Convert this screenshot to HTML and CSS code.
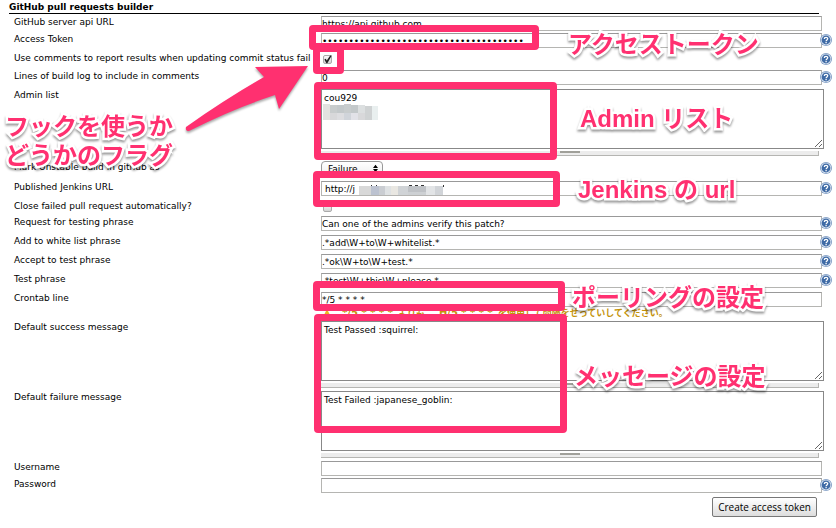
FILE: index.html
```html
<!DOCTYPE html>
<html lang="ja">
<head>
<meta charset="utf-8">
<title>GitHub pull requests builder</title>
<link rel="stylesheet" href="styles.css">
</head>
<body>
<svg class="defs" aria-hidden="true">
  <symbol id="help" viewBox="0 0 12 12">
    <circle cx="6" cy="6" r="6" fill="#7f9cc4"/>
    <circle cx="6" cy="6" r="5.2" fill="#dbe5f1"/>
    <circle cx="6" cy="6" r="4.4" fill="#3f6ba6"/>
    <path d="M4.3 4.9C4.3 2.7 7.8 2.8 7.7 4.8C7.6 6 6.2 5.9 6.1 7.2M6.1 8.1V9.3" fill="none" stroke="#fff" stroke-width="1.3"/>
  </symbol>
  <symbol id="warn" viewBox="0 0 8 8"><path d="M4 0L8 8H0Z" fill="#e8b820"/></symbol>
</svg>
<main class="page">
  <form class="builder">
    <h1 class="title">GitHub pull requests builder</h1>
    <div class="row tight"><label for="api">GitHub server api URL</label><div class="control"><input class="text" id="api" type="text" value="https://api.github.com"></div></div>
    <div class="row"><label for="token">Access Token</label><div class="control"><input class="text" id="token" type="password" value="01234567890123456789012345678901234567"></div><svg class="help"><use href="#help"/></svg></div>
    <div class="row"><label for="comments">Use comments to report results when updating commit status fail</label><div class="control"><input class="check" id="comments" type="checkbox" checked></div><svg class="help"><use href="#help"/></svg></div>
    <div class="row"><label for="lines">Lines of build log to include in comments</label><div class="control"><input class="text" id="lines" type="text" value="0"></div><svg class="help"><use href="#help"/></svg></div>
    <div class="row multi"><label for="admins">Admin list</label><div class="control"><textarea class="area" id="admins">cou929</textarea><div class="handle"></div></div></div>
    <div class="row spaced"><label for="unstable">Mark Unstable build in github as</label><div class="control"><span class="picker"><select id="unstable"><option>Failure</option></select><svg viewBox="0 0 6 9"><path d="M3 0L6 4H0ZM3 9L6 5H0Z"/></svg></span></div><svg class="help"><use href="#help"/></svg></div>
    <div class="row"><label for="jenkins">Published Jenkins URL</label><div class="control"><input class="text inset" id="jenkins" type="text" value="http://j"></div><svg class="help"><use href="#help"/></svg></div>
    <div class="row tight"><label for="close">Close failed pull request automatically?</label><div class="control"><input class="check" id="close" type="checkbox"></div></div>
    <div class="row"><label for="request">Request for testing phrase</label><div class="control"><input class="text" id="request" type="text" value="Can one of the admins verify this patch?"></div><svg class="help"><use href="#help"/></svg></div>
    <div class="row"><label for="white">Add to white list phrase</label><div class="control"><input class="text" id="white" type="text" value=".*add\W+to\W+whitelist.*"></div><svg class="help"><use href="#help"/></svg></div>
    <div class="row"><label for="accept">Accept to test phrase</label><div class="control"><input class="text" id="accept" type="text" value=".*ok\W+to\W+test.*"></div><svg class="help"><use href="#help"/></svg></div>
    <div class="row"><label for="test">Test phrase</label><div class="control"><input class="text" id="test" type="text" value=".*test\W+this\W+please.*"></div><svg class="help"><use href="#help"/></svg></div>
    <div class="row tight"><label for="cron">Crontab line</label><div class="control"><input class="text" id="cron" type="text" value="*/5 * * * *"><p class="warning"><svg><use href="#warn"/></svg><span><span class="expr">"*/5 * * * *"</span>よりも、<span class="expr">"H/5 * * * *"</span>を使用して間隔をせっていしてください。</span></p></div></div>
    <div class="row multi"><label for="success">Default success message</label><div class="control"><textarea class="area" id="success">Test Passed :squirrel:</textarea><div class="handle"></div></div></div>
    <div class="row multi"><label for="failure">Default failure message</label><div class="control"><textarea class="area" id="failure">Test Failed :japanese_goblin:</textarea><div class="handle"></div></div></div>
    <div class="row tight"><label for="user">Username</label><div class="control"><input class="text" id="user" type="text"></div></div>
    <div class="row"><label for="pass">Password</label><div class="control"><input class="text" id="pass" type="password"></div><svg class="help"><use href="#help"/></svg></div>
    <div class="actions"><button class="button" type="button">Create access token</button></div>
  </form>

  <div class="notes">
    <svg class="mosaic mosaic-admin" viewBox="0 0 55 16" shape-rendering="crispEdges">
      <path fill="#e2e2e0" d="M0 0h7v16H0z"/><path fill="#c8cccd" d="M7 1h7v8H7zM21 0h7v9h-7z"/><path fill="#c3c8ca" d="M14 1h7v8h-7zM28 1h7v8h-7z"/><path fill="#dcdfe0" d="M35 1h7v8h-7z"/><path fill="#cfd2d3" d="M42 2h7v14h-7z"/><path fill="#e9efef" d="M49 2h6v14h-6z"/><path fill="#d8d8da" d="M7 9h7v7H7zM35 9h7v7h-7z"/><path fill="#dddde0" d="M14 9h7v7h-7z"/><path fill="#d0d4da" d="M21 9h7v7h-7z"/><path fill="#e2e2e8" d="M28 9h7v7h-7z"/>
    </svg>
    <svg class="mosaic mosaic-url" viewBox="0 0 86 10" shape-rendering="crispEdges">
      <path fill="#d8d8d8" d="M0 1h12v9H0z"/><path fill="#bcc2d0" d="M12 1h8v9h-8z"/><path fill="#cacdd2" d="M20 1h6v9h-6z"/><path fill="#dfe2e4" d="M26 1h13v9H26z"/><path fill="#e9e7e2" d="M32 1h7v9h-7z"/><path fill="#d0d3d6" d="M39 1h10v9H39z"/><path fill="#bfc2c6" d="M49 1h18v6H49z"/><path fill="#cdd0d3" d="M49 7h18v3H49z"/><path fill="#e2e4e6" d="M67 1h9v9h-9z"/><path fill="#d1d4d8" d="M76 1h8v9h-8z"/>
      <path fill="#333" d="M12 0h1v1h-1zM17 0h1v1h-1zM50 0h3v1h-3zM56 0h3v1h-3zM62 0h3v1h-3zM84 0h1v2h-1z"/>
    </svg>
    <svg class="arrow" viewBox="0 0 140 80"><path d="M126 4L97 47L93 33Q50 47 7 69Q3 69 4 65Q42 38 82 15L73 5Z"/></svg>
    <div class="frame frame-token"></div>
    <div class="frame frame-flag"></div>
    <div class="frame frame-admin"></div>
    <div class="frame frame-url"></div>
    <div class="frame frame-cron"></div>
    <div class="frame frame-message"></div>
    <p class="note note-token">アクセストークン</p>
    <p class="note note-flag">フックを使うか<br>どうかのフラグ</p>
    <p class="note note-admin">Admin リスト</p>
    <p class="note note-url">Jenkins の url</p>
    <p class="note note-cron">ポーリングの設定</p>
    <p class="note note-message">メッセージの設定</p>
  </div>
</main>
</body>
</html>
```
FILE: styles.css
```css
* { box-sizing: border-box; }
body { margin: 0; background: #fff; color: #000; font: 9px/13px "DejaVu Sans", "Noto Sans CJK JP", sans-serif; }
.defs { position: absolute; width: 0; height: 0; }
.page { position: relative; overflow: hidden; }
.builder { padding: 2px 4px 10px 9px; }
.title { margin: 0 13px 2px 0; border-bottom: 1px solid #000; font-size: 9px; line-height: 11px; }
.row { display: grid; grid-template-columns: 307px 1fr 8px; padding: 0 0 4px 5px; align-items: start; }
.row.tight { padding-bottom: 2px; }
.row.multi { padding-bottom: 3px; }
.row.spaced { padding-top: 2px; }
.row label { white-space: nowrap; }
.control { min-width: 0; }
.help { width: 12px; height: 12px; margin: 1px 0 0 -4px; }
.text, .area { display: block; width: 100%; margin: 0; border: 1px solid #b5b5b2; border-top-color: #999; border-radius: 0; background: #fff; color: #000; font: inherit; }
.text { width: calc(100% - 2px); height: 15px; padding: 0; }
.text.inset { padding-left: 3px; }
.area { height: 60px; padding: 2px; border-color: #888; resize: vertical; }
.handle { height: 5px; margin: 2px 5px 0 0; border: solid #b5b5b2; border-width: 0 1px 1px 0; background: linear-gradient(#a0a09a, #a0a09a) center top / 20px 2px no-repeat #ececec; }
.check { position: relative; display: block; width: 9px; height: 9px; margin: 3px 2px 2px; border: 1px solid #aaa; border-radius: 2px; background: linear-gradient(#fafafa, #d4d4d4); appearance: none; }
.check:checked::before { content: ""; position: absolute; inset: -1px; background: #222; clip-path: polygon(15% 50%, 30% 42%, 42% 62%, 80% 5%, 98% 5%, 48% 92%, 38% 92%); }
.picker { position: relative; display: block; width: 62px; }
.picker select { display: block; width: 100%; height: 16px; padding: 0 6px; border: 1px solid #999; border-radius: 4px; background: linear-gradient(#fff, #eee); appearance: none; color: #000; font: inherit; }
.picker svg { position: absolute; right: 5px; top: 3px; width: 5px; height: 9px; }
.warning { display: flex; gap: 6px; margin: 0 0 0 2px; color: #c4930a; font-weight: bold; line-height: 12px; white-space: nowrap; }
.warning svg { width: 8px; height: 8px; margin-top: 2px; }
.expr { font-size: 10px; }
.actions { display: flex; justify-content: flex-end; padding-right: 15px; }
.button { height: 20px; padding: 0 5px; border: 1px solid #777; border-radius: 2px; background: linear-gradient(#fff, #ddd); color: #000; font: 10px/18px "Open Sans", sans-serif; }
.notes { position: absolute; inset: 0; pointer-events: none; }
.mosaic { position: absolute; }
.mosaic-admin { left: 323px; top: 104px; width: 55px; height: 16px; }
.mosaic-url { left: 359px; top: 185px; width: 86px; height: 10px; }
.frame { position: absolute; border: 7px solid #ff3070; border-radius: 4px; }
.frame-token { left: 309px; top: 25px; width: 230px; height: 25px; }
.frame-flag { left: 313px; top: 45px; width: 31px; height: 29px; }
.frame-admin { left: 314px; top: 82px; width: 243px; height: 78px; }
.frame-url { left: 313px; top: 171px; width: 247px; height: 36px; }
.frame-cron { left: 313px; top: 281px; width: 252px; height: 30px; }
.frame-message { left: 314px; top: 314px; width: 253px; height: 119px; }
.arrow { position: absolute; left: 182px; top: 62px; width: 140px; height: 80px; fill: #ff3070; filter: drop-shadow(0 2px 1px #0005); }
.note { position: absolute; margin: 0; color: #ff3070; font: bold 24px/29px "Liberation Sans", "Noto Sans CJK JP", sans-serif; white-space: nowrap; -webkit-text-stroke: 5px #fff; paint-order: stroke fill; filter: drop-shadow(0 2px 1px #0006); }
.note-token { left: 568px; top: 30px; }
.note-flag { left: 5px; top: 112px; }
.note-admin { left: 580px; top: 104px; }
.note-url { left: 578px; top: 175px; }
.note-cron { left: 572px; top: 283px; }
.note-message { left: 574px; top: 362px; }
```
